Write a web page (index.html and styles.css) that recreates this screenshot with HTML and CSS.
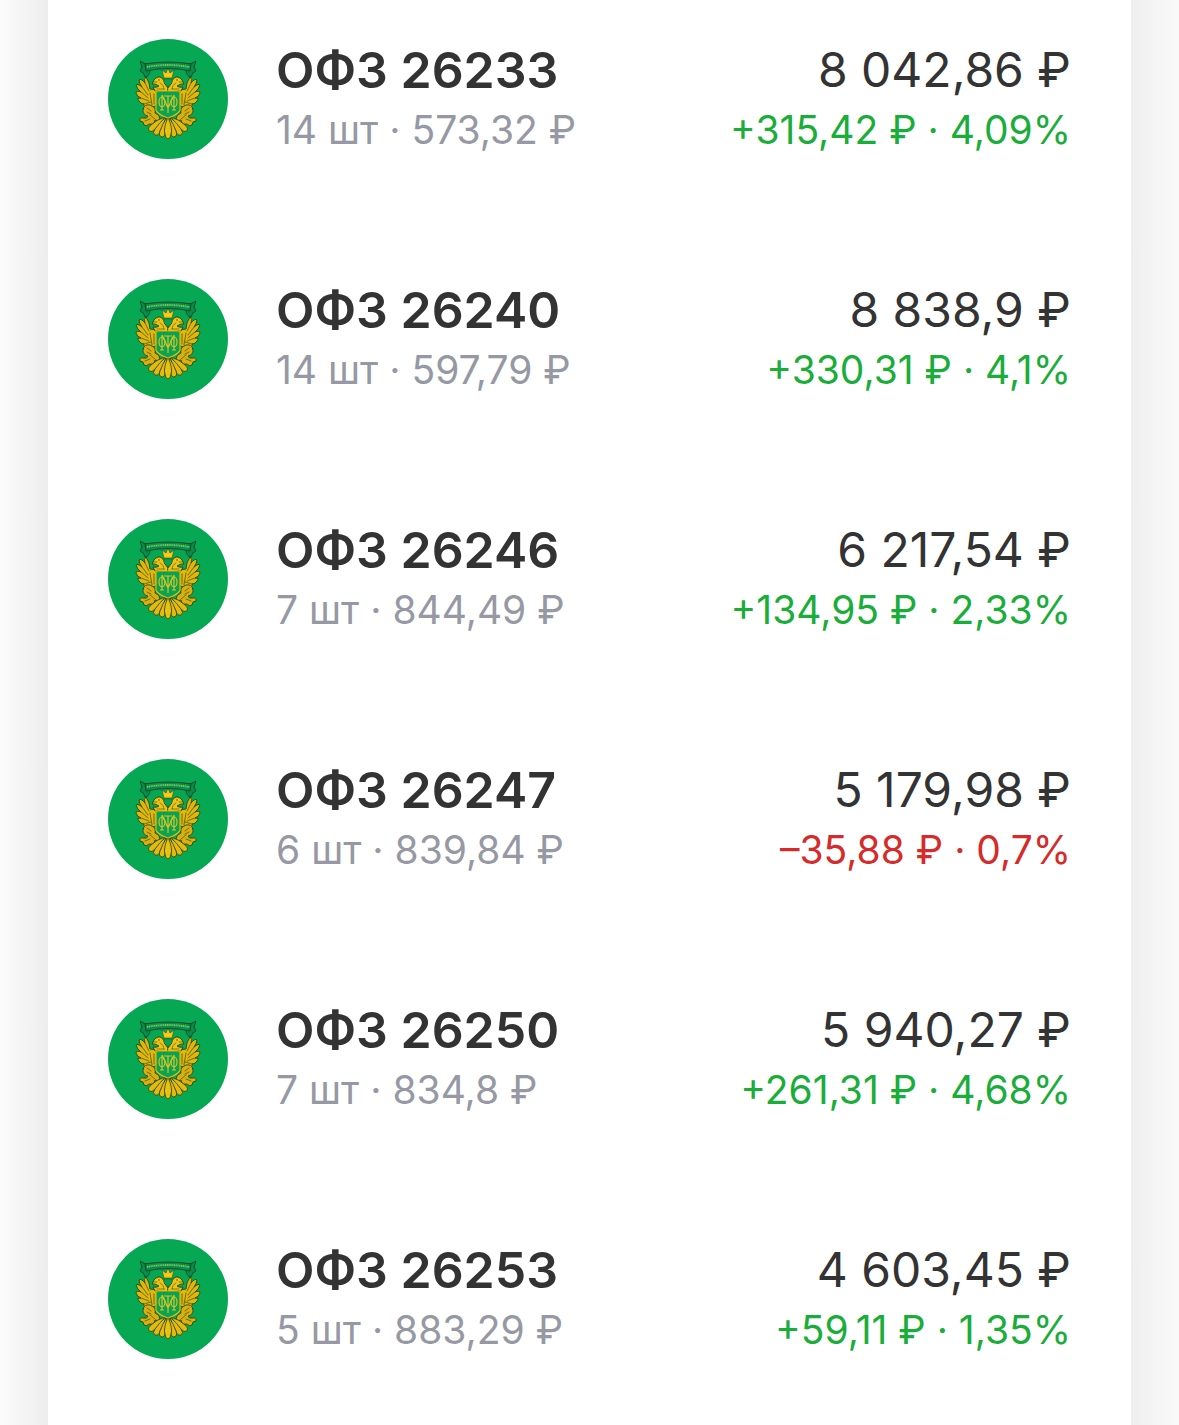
FILE: index.html
```html
<!DOCTYPE html>
<html lang="ru">
<head>
    <meta charset="UTF-8">
    <meta name="viewport" content="width=device-width, initial-scale=1">
    <title>Облигации</title>
    <link rel="stylesheet" href="styles.css">
</head>
<body>
    <!-- emblem, shared by all rows -->
    <svg class="sprite" aria-hidden="true">
        <!-- one half, the other is mirrored -->
        <g id="half" stroke="#2f5216" stroke-width="1" stroke-linejoin="round" stroke-linecap="round">
            <!-- wing -->
            <path fill="#e3b60c" d="M49 51 L42 50 Q42 44 38 38 Q35 40 37 44 Q33 39 31 41 Q31 44 34 48 Q29 44 28 46 Q29 50 33 53 Q28 51 28 54 Q29 58 33 59 Q28 59 31 62 Q33 65 36 65 Q35 68 39 68 Q43 70 49 66 Z"/>
            <path fill="none" stroke-width="0.7" d="M37 44 L41 52 M34 48 L40 56 M33 53 L40 59 M33 59 L41 62 M36 65 L43 63 M42 54 L44 66 M46 55 V65"/>
            <!-- head and neck -->
            <path fill="#f2c313" d="M60 53 L47 52 L45 48 Q49 49 51 47 L47 45 L44 45 L46 41 Q50 36 54 39 Q56 41 57 45 L60 49 Z"/>
            <path fill="none" stroke-width="0.6" d="M45 43 L49 43 M52 44 Q56 46 56 50 M49 50 H56"/>
            <circle cx="51" cy="41" r="0.7" fill="#17451c" stroke="none"/>
            <!-- supporter -->
            <path fill="#dcae10" d="M36 68 Q39 64 44 67 Q48 69 47 74 Q52 76 52 80 Q50 83 47 81 Q46 86 41 85 Q39 88 36 86 L35 83 L32 82 Q31 78 36 79 Q39 80 40 77 Q35 76 35 72 Z"/>
            <path fill="none" stroke-width="0.7" d="M39 69 L43 72 M39 73 L43 75 M42 76 L47 80 M37 82 L42 80"/>
            <!-- tail feathers -->
            <g fill="#e6b90d" stroke-width="0.9">
                <path d="M57 78 Q48 81 43 86 Q39 89 41 92 Q44 94 47 90 Q53 85 57 78 Z"/>
                <path d="M58 78 Q51 84 47 90 Q44 94 47 96 Q51 97 52 92 Q56 86 58 78 Z"/>
                <path d="M59 78 Q54 86 52 92 Q50 97 54 98 Q57 98 57 93 Q59 87 59 78 Z"/>
            </g>
            <!-- ribbon end -->
            <path fill="#078f4a" stroke="#0b4a2a" d="M40 25 Q36 25 32 22 L34 28 L32 32 Q36 33 37 38 Q41 38 42 32 Z"/>
        </g>
        <symbol id="emblem" viewBox="0 0 120 120">
            <circle cx="60" cy="60" r="60" fill="#06a854"/>
            <use href="#half"/>
            <use href="#half" transform="matrix(-1 0 0 1 120 0)"/>
            <path fill="#edc010" stroke="#2f5216" stroke-width="0.9" d="M60 78 Q55 90 57 95 Q57 99 60 100 Q63 99 63 95 Q65 90 60 78 Z"/>
            <!-- shield -->
            <path fill="#06a352" stroke="#e3b60c" stroke-width="1.2" d="M48 52 H72 V71 Q71 75 60 79 Q49 75 48 71 Z"/>
            <!-- monogram -->
            <g fill="none" stroke="#d9c425" stroke-width="1.2">
                <path d="M54 71 V56 L60 69 L66 56 V71 M52 71 H56 M64 71 H68 M60 57 V74 M56 57 H64"/>
                <ellipse cx="54" cy="63" rx="3" ry="5"/>
                <ellipse cx="66" cy="63" rx="3" ry="5"/>
            </g>
            <!-- crown -->
            <path fill="#f7c918" stroke="#2f5216" stroke-width="0.6" d="M56 39 L54 31 L58 34 L60 29 L62 34 L66 31 L64 39 Z"/>
            <path fill="#06a352" stroke="#2c5a16" stroke-width="0.6" d="M56 40 H64 V44 L60 48 L56 44 Z"/>
            <!-- ribbon -->
            <path fill="#078f4a" stroke="#0b4a2a" stroke-width="1" stroke-linejoin="round" d="M37 25 Q60 21 83 25 L82 32 Q60 27 38 32 Z"/>
            <path fill="none" stroke="#8cc257" stroke-width="1.8" stroke-dasharray="1.2 0.6" d="M39 28 Q60 24 81 28"/>
        </symbol>
    </svg>

    <main class="sheet">
        <ul class="bonds">
            <li class="bond">
                <svg class="bond_logo" aria-hidden="true"><use href="#emblem"/></svg>
                <div class="bond_info">
                    <span class="bond_name">ОФЗ 26233</span>
                    <span class="bond_count">14 шт · 573,32 ₽</span>
                </div>
                <div class="bond_value">
                    <span class="bond_total">8 042,86 ₽</span>
                    <span class="bond_change up">+315,42 ₽ · 4,09%</span>
                </div>
            </li>
            <li class="bond">
                <svg class="bond_logo" aria-hidden="true"><use href="#emblem"/></svg>
                <div class="bond_info">
                    <span class="bond_name">ОФЗ 26240</span>
                    <span class="bond_count">14 шт · 597,79 ₽</span>
                </div>
                <div class="bond_value">
                    <span class="bond_total">8 838,9 ₽</span>
                    <span class="bond_change up">+330,31 ₽ · 4,1%</span>
                </div>
            </li>
            <li class="bond">
                <svg class="bond_logo" aria-hidden="true"><use href="#emblem"/></svg>
                <div class="bond_info">
                    <span class="bond_name">ОФЗ 26246</span>
                    <span class="bond_count">7 шт · 844,49 ₽</span>
                </div>
                <div class="bond_value">
                    <span class="bond_total">6 217,54 ₽</span>
                    <span class="bond_change up">+134,95 ₽ · 2,33%</span>
                </div>
            </li>
            <li class="bond">
                <svg class="bond_logo" aria-hidden="true"><use href="#emblem"/></svg>
                <div class="bond_info">
                    <span class="bond_name">ОФЗ 26247</span>
                    <span class="bond_count">6 шт · 839,84 ₽</span>
                </div>
                <div class="bond_value">
                    <span class="bond_total">5 179,98 ₽</span>
                    <span class="bond_change down">–35,88 ₽ · 0,7%</span>
                </div>
            </li>
            <li class="bond">
                <svg class="bond_logo" aria-hidden="true"><use href="#emblem"/></svg>
                <div class="bond_info">
                    <span class="bond_name">ОФЗ 26250</span>
                    <span class="bond_count">7 шт · 834,8 ₽</span>
                </div>
                <div class="bond_value">
                    <span class="bond_total">5 940,27 ₽</span>
                    <span class="bond_change up">+261,31 ₽ · 4,68%</span>
                </div>
            </li>
            <li class="bond">
                <svg class="bond_logo" aria-hidden="true"><use href="#emblem"/></svg>
                <div class="bond_info">
                    <span class="bond_name">ОФЗ 26253</span>
                    <span class="bond_count">5 шт · 883,29 ₽</span>
                </div>
                <div class="bond_value">
                    <span class="bond_total">4 603,45 ₽</span>
                    <span class="bond_change up">+59,11 ₽ · 1,35%</span>
                </div>
            </li>
        </ul>
    </main>
</body>
</html>
```
FILE: styles.css
```css
/*tag*/
*{
    box-sizing: border-box;
}
body{
    margin: 0;
    min-height: 100vh;
    padding: 0 48px;
    font-family: Inter, "Liberation Sans", sans-serif;
    color: #333333;
    /* soft shade on both sides of the sheet */
    background:
        linear-gradient(to right, #fbfbfb, #f5f5f5 50%, #ededed) left / 48px 100% no-repeat,
        linear-gradient(to left, #f9f9f9, #f5f5f5 50%, #eeeeee) right / 48px 100% no-repeat;
}

/*class*/
.sprite{
    display: block;
    width: 0;
    height: 0;
}
.sheet{
    min-height: 100vh;
    padding: 39px 60px 66px;
    background: #ffffff;
}
.bonds{
    display: flex;
    flex-direction: column;
    gap: 120px;
    margin: 0;
    padding: 0;
    list-style: none;
}
.bond{
    display: flex;
    align-items: center;
    gap: 48px;
    height: 120px;
}
.bond_logo{
    flex: none;
    width: 120px;
    height: 120px;
}
.bond_info,
.bond_value{
    display: flex;
    flex-direction: column;
    padding-top: 2px;
    white-space: nowrap;
}
.bond_value{
    margin-left: auto;
    text-align: right;
}
.bond_name,
.bond_total{
    line-height: 60px;
}
.bond_name{
    font-size: 50px;
    font-weight: 600;
}
.bond_total{
    font-size: 48px;
}
.bond_count,
.bond_change{
    font-size: 39px;
    line-height: 60px;
}
.bond_count{
    color: #9699a3;
}
.up{
    color: #1aad3a;
}
.down{
    color: #d52b2b;
}
```
